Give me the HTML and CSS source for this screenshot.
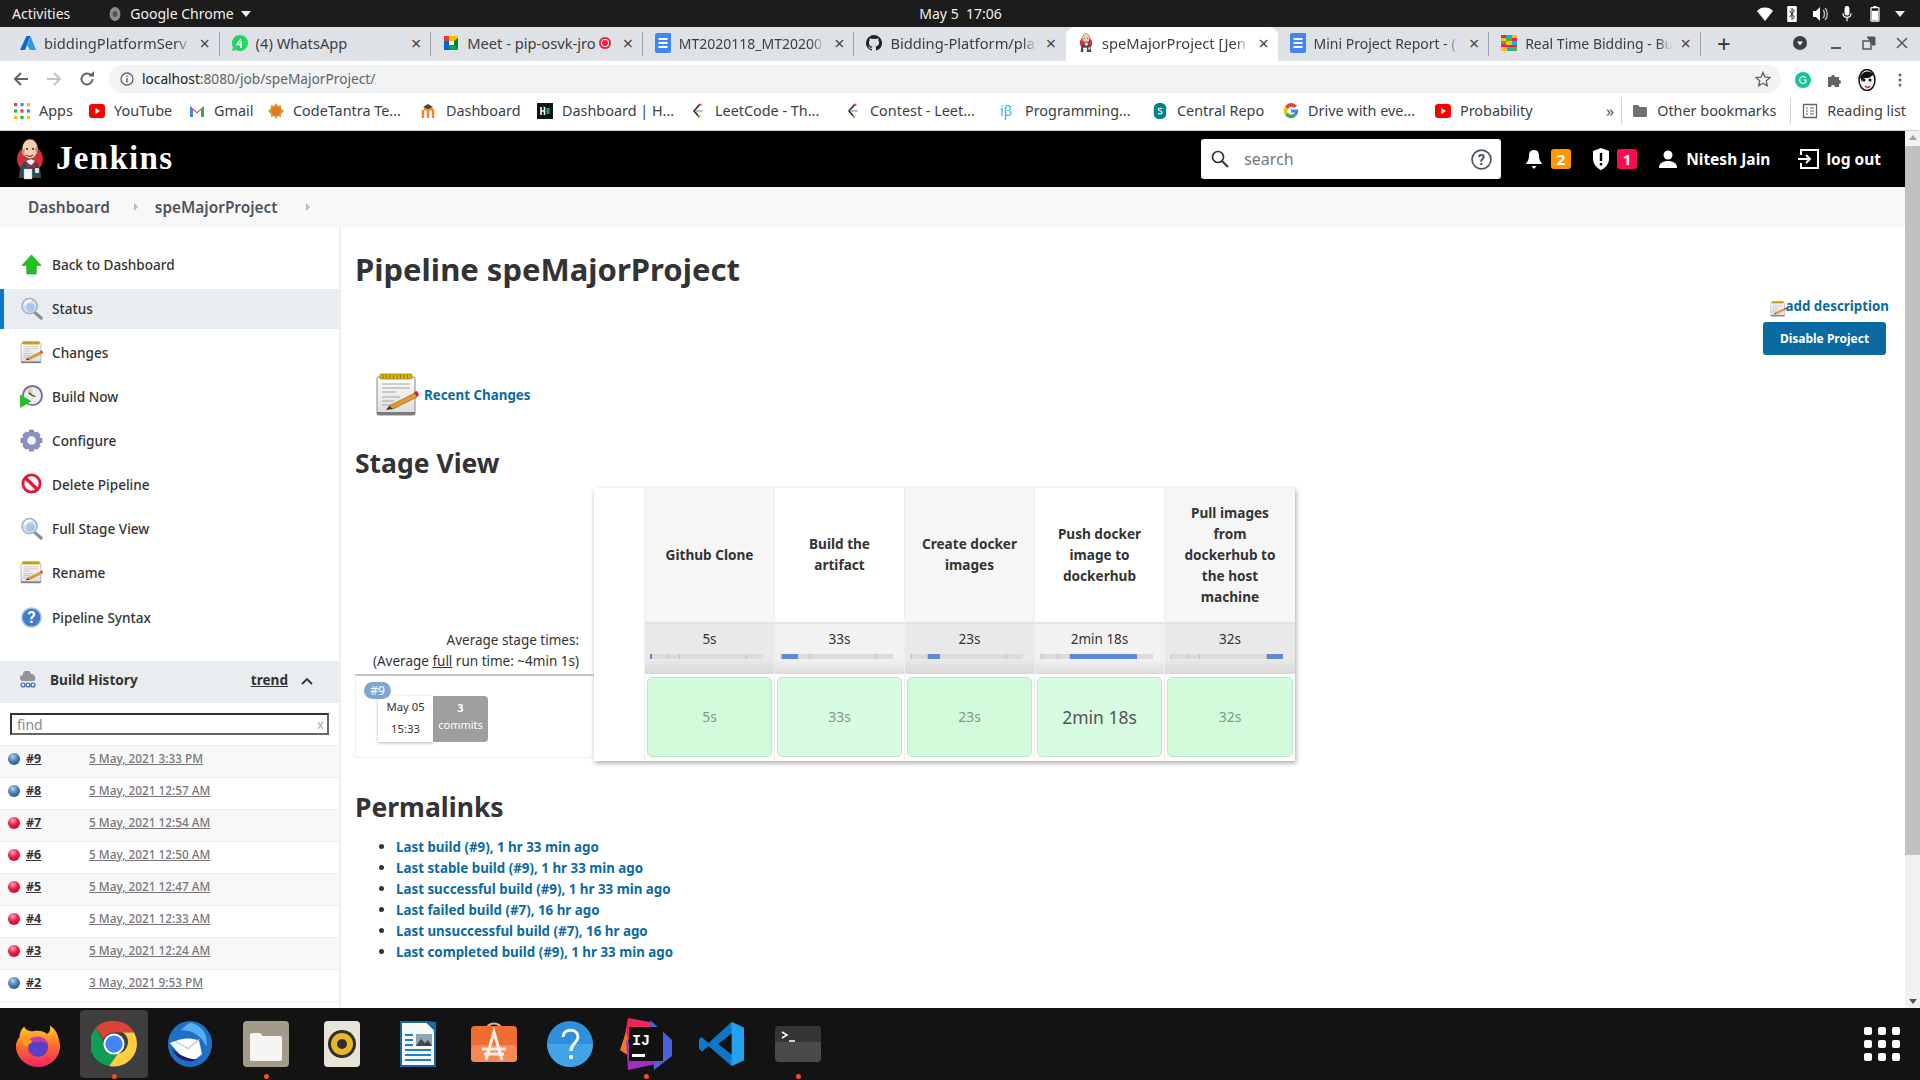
FILE: index.html
```html
<!DOCTYPE html>
<html lang="en">
<head>
<meta charset="utf-8">
<title>speMajorProject [Jenkins]</title>
<link rel="stylesheet" href="styles.css">
</head>
<body>
<svg class="defs" aria-hidden="true">
  <defs>
    <radialGradient id="gBlue" cx="40%" cy="30%" r="75%"><stop offset="0" stop-color="#b8cfe8"/><stop offset=".55" stop-color="#4a7fb8"/><stop offset="1" stop-color="#2a5488"/></radialGradient>
    <radialGradient id="gRed" cx="40%" cy="30%" r="75%"><stop offset="0" stop-color="#ffb0c0"/><stop offset=".5" stop-color="#ef1f45"/><stop offset="1" stop-color="#c30a2c"/></radialGradient>
    <linearGradient id="gPage" x1="0" y1="0" x2="0" y2="1"><stop offset="0" stop-color="#fdfdfd"/><stop offset="1" stop-color="#dcdcdc"/></linearGradient>
    <linearGradient id="gFox" x1="0" y1="0" x2="0" y2="1"><stop offset="0" stop-color="#ffd02e"/><stop offset=".5" stop-color="#ff6a2a"/><stop offset="1" stop-color="#f0246a"/></linearGradient>
    <symbol id="notepad" viewBox="0 0 44 44">
      <rect x="2" y="4" width="38" height="38" rx="2" fill="url(#gPage)" stroke="#8a8a8a"/>
      <rect x="2" y="39" width="38" height="3" fill="#7d7d7d"/>
      <rect x="5" y="1" width="32" height="5" rx="1" fill="#d8b516" stroke="#8d7a12" stroke-width=".7"/>
      <path d="M8 2v3M11.500 2v3M15 2v3M18.500 2v3M22 2v3M25.500 2v3M29 2v3M32.500 2v3" stroke="#7a6a10" stroke-width=".8"/>
      <path d="M7 11h28M7 15h28M7 19h14M7 24h18M7 28h12M7 32h10" stroke="#a5a5a5" stroke-width="1"/>
      <path d="M14 33l26-13 2 4-24 12z" fill="#e39a2c" stroke="#9b6414" stroke-width=".7"/>
      <path d="M39 19l3-1 2 4-2 2z" fill="#e2173f"/>
      <path d="M14 33l4 3-7 1z" fill="#3b3226"/>
    </symbol>
    <symbol id="lens" viewBox="0 0 24 24">
      <path d="M14 15l8 7" stroke="#8a8f96" stroke-width="3.400" stroke-linecap="round"/>
      <circle cx="10" cy="9.500" r="8" fill="#cfe2f5" stroke="#a8b2bd" stroke-width="1.600"/>
      <path d="M5 8a5.500 5.500 0 0 1 7-4" stroke="#fff" stroke-width="2" fill="none"/>
      <circle cx="11" cy="11" r="4.500" fill="#8db6e0" opacity=".6"/>
    </symbol>
    <symbol id="ball-blue" viewBox="0 0 14 14"><circle cx="7" cy="7" r="6" fill="url(#gBlue)"/></symbol>
    <symbol id="ball-red" viewBox="0 0 14 14"><circle cx="7" cy="7" r="6" fill="url(#gRed)"/></symbol>
    <symbol id="doc" viewBox="0 0 16 20"><path d="M0 2a2 2 0 0 1 2-2h14v18a2 2 0 0 1-2 2H2a2 2 0 0 1-2-2z" fill="#4285f4"/><path d="M3.500 6h9M3.500 10h9M3.500 14h9" stroke="#fff" stroke-width="2"/></symbol>
    <symbol id="yt" viewBox="0 0 16 16"><rect x="0" y="1" width="16" height="14" rx="3" fill="#f00"/><path d="M6.500 5l4.500 3-4.500 3z" fill="#fff"/></symbol>
    <symbol id="leet" viewBox="0 0 16 20"><path d="M10 2L3 10l7 8" fill="none" stroke="#333" stroke-width="2"/><path d="M5 10h9" stroke="#aaa" stroke-width="2"/><path d="M8 16l3 1" stroke="#f89f1b" stroke-width="2"/><circle cx="11" cy="2" r="1.500" fill="#e8443a"/></symbol>
    <symbol id="jhead" viewBox="0 0 30 42">
      <circle cx="15" cy="21" r="13" fill="#d62b3a"/>
      <path d="M4 40c0-11 4-18 11-18s11 7 11 18z" fill="#2f4a58"/>
      <path d="M11 23l5 5 4-5-4-2z" fill="#f2f2f2"/>
      <path d="M12 25l4 2 4-2v5l-4-2-4 2z" fill="#d02030"/>
      <ellipse cx="15" cy="11" rx="8" ry="10" fill="#f3cdb0" stroke="#3b2c25" stroke-width=".7"/>
      <path d="M7 12c-1 3 0 5 2 6l1-7zM22 8c1 3 1 5 0 8l-2-5z" fill="#a89a8e"/>
      <circle cx="12" cy="11" r="1" fill="#222"/><circle cx="18" cy="11" r="1" fill="#222"/>
      <path d="M11 17c2 1.500 5 1.500 7 0" stroke="#8a2e24" stroke-width="1.200" fill="none"/>
      <rect x="9" y="31" width="8" height="10" fill="#f6f6f6" stroke="#aaa" stroke-width=".4"/>
      <rect x="20" y="30" width="4" height="5" rx="1" fill="#efe3d8"/>
    </symbol>
  </defs>
</svg>

<div class="gnome">
  <div class="gnome-left"><span>Activities</span><span class="gnome-app"><svg class="i14" viewBox="0 0 14 18"><ellipse cx="7" cy="9" rx="7" ry="9" fill="#8c8c8c"/><ellipse cx="7" cy="9" rx="3" ry="4" fill="#555"/></svg>Google Chrome<i class="caret"></i></span></div>
  <div class="gnome-clock">May 5&nbsp; 17:06</div>
  <div class="gnome-tray">
    <svg class="i16" viewBox="0 0 16 16"><path d="M0 5a11 11 0 0 1 16 0L8 15z" fill="#fff"/></svg>
    <svg class="i16" viewBox="0 0 12 20"><rect width="12" height="20" rx="1.500" fill="#fff"/><path d="M3 6l6 8-3 3V3l3 3-6 8" fill="none" stroke="#222" stroke-width="1.200"/></svg>
    <svg class="i16" viewBox="0 0 16 16"><path d="M1 5h3l4-4v14l-4-4H1z" fill="#fff"/><path d="M11 4c2 2 2 6 0 8M13 2c3 3 3 9 0 12" stroke="#bbb" fill="none" stroke-width="1.400"/></svg>
    <svg class="i16" viewBox="0 0 16 20"><rect x="5" y="0" width="6" height="12" rx="3" fill="#fff"/><path d="M3 9c0 7 10 7 10 0M8 14v5" stroke="#fff" fill="none" stroke-width="1.500"/></svg>
    <svg class="i16" viewBox="0 0 12 20"><rect x="4" y="0" width="4" height="2" fill="#fff"/><rect x="1" y="2" width="10" height="17" rx="1" fill="none" stroke="#fff" stroke-width="1.500"/><rect x="2" y="6" width="8" height="12" fill="#fff"/></svg>
    <i class="caret"></i>
  </div>
</div>

<div class="tabstrip">
  <div class="tab"><svg class="fav" viewBox="0 0 16 16"><path d="M6.500 1h4L5 15H0z" fill="#0a6cc4"/><path d="M10.500 1l5.500 14h-6L8 11H5l3-2z" fill="#2a9ae8"/></svg><span class="tab-title">biddingPlatformServ</span><span class="tab-x">×</span></div>
  <div class="tab"><svg class="fav" viewBox="0 0 16 16"><path d="M8 0a8 8 0 0 1 0 16 8 8 0 0 1-4-1l-4 1 1-4A8 8 0 0 1 8 0z" fill="#25d366"/><path d="M8.800 4L5 9.500h5M9 6v7" stroke="#fff" stroke-width="1.300" fill="none"/></svg><span class="tab-title tab-meet">(4) WhatsApp</span><span class="tab-x">×</span></div>
  <div class="tab"><svg class="fav" viewBox="0 0 16 16"><rect x="1" y="1" width="14" height="14" rx="2" fill="#ffba00"/><rect x="1" y="9" width="14" height="6" fill="#00ac47"/><rect x="1" y="1" width="5" height="14" fill="#0066da"/><rect x="1" y="1" width="5" height="5" fill="#e53935"/><rect x="6" y="6" width="5" height="4" fill="#fff"/><path d="M11 6l4-3v10l-4-3z" fill="#00832d"/></svg><span class="tab-title tab-meet">Meet - pip-osvk-jro<i class="rec"></i></span><span class="tab-x">×</span></div>
  <div class="tab"><svg class="fav fav-doc"><use href="#doc"/></svg><span class="tab-title tab-tight">MT2020118_MT20200</span><span class="tab-x">×</span></div>
  <div class="tab"><svg class="fav" viewBox="0 0 16 16"><path d="M8 0a8 8 0 0 0-2.500 15.600c.4.100.5-.2.500-.4v-1.400c-2.200.5-2.700-1-2.700-1-.4-.9-.9-1.200-.9-1.200-.7-.5.100-.5.100-.5.800.100 1.200.8 1.200.8.700 1.200 1.900.9 2.300.7.100-.5.300-.9.500-1.100-1.800-.2-3.600-.9-3.600-4 0-.9.300-1.600.8-2.100-.1-.2-.4-1 .1-2.100 0 0 .7-.2 2.200.8a7.600 7.600 0 0 1 4 0c1.500-1 2.200-.8 2.200-.8.400 1.100.2 1.900.1 2.100.5.600.8 1.300.8 2.100 0 3.100-1.900 3.800-3.700 4 .3.300.6.800.6 1.500v2.200c0 .2.100.5.500.4A8 8 0 0 0 8 0z" fill="#222"/></svg><span class="tab-title">Bidding-Platform/pla</span><span class="tab-x">×</span></div>
  <div class="tab tab-active"><svg class="fav fav-doc" viewBox="0 0 30 42"><use href="#jhead"/></svg><span class="tab-title">speMajorProject [Jen</span><span class="tab-x">×</span></div>
  <div class="tab"><svg class="fav fav-doc"><use href="#doc"/></svg><span class="tab-title tab-tight">Mini Project Report - (</span><span class="tab-x">×</span></div>
  <div class="tab"><svg class="fav" viewBox="0 0 16 16"><rect width="16" height="16" fill="#e91e63"/><path d="M0 3h5v3H0zM11 0h5v3h-5zM5 6h6v4H5zM0 12h6v4H0z" fill="#ffc107"/><path d="M5 0h6v3H5zM11 6h5v4h-5zM6 12h5v4H6z" fill="#00bcd4"/><path d="M0 6h5v3H0zM5 3h6v3H5zM11 12h5v4h-5z" fill="#4caf50"/></svg><span class="tab-title tab-tight">Real Time Bidding - Bu</span><span class="tab-x">×</span></div>
  <div class="tab-new">+</div>
  <div class="winctl">
    <svg class="i14 w-first" viewBox="0 0 14 14"><circle cx="7" cy="7" r="7" fill="#3c4043"/><path d="M4 5.500h6L7 9.500z" fill="#fff"/></svg>
    <svg class="i14" viewBox="0 0 14 14"><rect x="2" y="11" width="10" height="2" fill="#555"/></svg>
    <svg class="i14" viewBox="0 0 14 14"><path d="M1 5h8v8H1z" fill="none" stroke="#555" stroke-width="1.500"/><path d="M5 1h8v8h-3" fill="#555" stroke="#555" stroke-width="1"/></svg>
    <svg class="i14" viewBox="0 0 14 14"><path d="M2 2l10 10M12 2L2 12" stroke="#555" stroke-width="1.500"/></svg>
  </div>
</div>

<div class="toolbar">
  <svg class="nav" viewBox="0 0 16 16"><path d="M15 8H2M8 2L2 8l6 6" fill="none" stroke="#5f6368" stroke-width="2"/></svg>
  <svg class="nav" viewBox="0 0 16 16"><path d="M1 8h13M8 2l6 6-6 6" fill="none" stroke="#bfc1c4" stroke-width="2"/></svg>
  <svg class="nav" viewBox="0 0 16 16"><path d="M13.500 8A5.500 5.500 0 1 1 11.800 4" fill="none" stroke="#5f6368" stroke-width="1.900"/><path d="M9.500 5.500H15V0z" fill="#5f6368"/></svg>
  <div class="omni">
    <svg class="i14" viewBox="0 0 14 14"><circle cx="7" cy="7" r="6" fill="none" stroke="#5f6368" stroke-width="1.300"/><path d="M7 6v4.500M7 3.500v1.500" stroke="#5f6368" stroke-width="1.400"/></svg>
    <span class="url"><b>localhost</b>:8080/job/speMajorProject/</span>
    <svg class="i16 star" viewBox="0 0 16 16"><path d="M8 1.500l2 4.600 5 .5-3.800 3.300 1.100 4.900L8 12.300l-4.300 2.500 1.100-4.900L1 6.600l5-.5z" fill="none" stroke="#5f6368" stroke-width="1.300"/></svg>
  </div>
  <div class="ext">
    <svg class="i16" viewBox="0 0 16 16"><circle cx="8" cy="8" r="8" fill="#15c39a"/><path d="M11 6a3.500 3.500 0 1 0 0 4V8H8.500" fill="none" stroke="#fff" stroke-width="1.200"/></svg>
    <svg class="i16" viewBox="0 0 16 16"><path d="M2 5h3a2 2 0 1 1 4 0h4v3a2 2 0 1 1 0 4v3H9a2 2 0 1 0-4 0H2z" fill="#5f6368"/></svg>
    <svg class="i20" viewBox="0 0 20 22"><ellipse cx="10" cy="11" rx="8" ry="10.500" fill="#f2f2f2" stroke="#111" stroke-width="1.500"/><path d="M3 8c3-7 11-7 14-2-3 0-3 3-6 3S6 8 5 13z" fill="#111"/><circle cx="7" cy="11" r="1.500" fill="#111"/><circle cx="13" cy="11" r="1.500" fill="#111"/><path d="M8 17c2 2 4 2 5 0" stroke="#b02a4a" stroke-width="1.500" fill="none"/></svg>
    <svg class="i16" viewBox="0 0 16 16"><circle cx="8" cy="3" r="1.500" fill="#5f6368"/><circle cx="8" cy="8" r="1.500" fill="#5f6368"/><circle cx="8" cy="13" r="1.500" fill="#5f6368"/></svg>
  </div>
</div>

<div class="bookmarks">
  <a class="bm"><svg class="i15" viewBox="0 0 15 15"><path d="M0 0h3v3H0z" fill="#ea4335"/><path d="M6 0h3v3H6z" fill="#4285f4"/><path d="M12 0h3v3h-3z" fill="#fbbc05"/><path d="M0 6h3v3H0z" fill="#34a853"/><path d="M6 6h3v3H6z" fill="#ea4335"/><path d="M12 6h3v3h-3z" fill="#4285f4"/><path d="M0 12h3v3H0z" fill="#fbbc05"/><path d="M6 12h3v3H6z" fill="#34a853"/><path d="M12 12h3v3h-3z" fill="#fbbc05"/></svg>Apps</a>
  <a class="bm"><svg class="i15"><use href="#yt"/></svg>YouTube</a>
  <a class="bm"><svg class="i15" viewBox="0 0 16 16"><path d="M1 14V3l7 6 7-6v11h-3V7L8 10.500 4 7v7z" fill="#ea4335"/><path d="M1 14V3l3 3v8z" fill="#4285f4"/><path d="M15 14V3l-3 3v8z" fill="#34a853"/></svg>Gmail</a>
  <a class="bm"><svg class="i15" viewBox="0 0 16 16"><path d="M8 0l2 3 3-1v3l3 3-3 3v3l-3-1-2 3-2-3-3 1v-3L0 8l3-3V2l3 1z" fill="#c2a032"/><circle cx="8" cy="8" r="4.500" fill="#f37021"/></svg>CodeTantra Te...</a>
  <a class="bm"><svg class="i15" viewBox="0 0 16 16"><path d="M2 15V7M7 15V7M12 15V8c0-1.500-1.500-2-3-2H3" fill="none" stroke="#f58220" stroke-width="2.500"/><path d="M2 4l5-3 5 3-5 2z" fill="#444"/></svg>Dashboard</a>
  <a class="bm"><svg class="i15" viewBox="0 0 16 16"><rect width="16" height="16" fill="#0e141e"/><path d="M4 4v8M7.500 4v8M4 8h3.500" stroke="#fff" stroke-width="1.600"/><rect x="9.500" y="5" width="3" height="6" fill="#1ba94c"/></svg>Dashboard | H...</a>
  <a class="bm"><svg class="i15" viewBox="0 0 16 20"><use href="#leet"/></svg>LeetCode - Th...</a>
  <a class="bm"><svg class="i15" viewBox="0 0 16 20"><use href="#leet"/></svg>Contest - Leet...</a>
  <a class="bm"><span class="ib">iβ</span>Programming...</a>
  <a class="bm"><svg class="i15" viewBox="0 0 16 18"><path d="M8 0c4 0 7 2 7 6v6c0 4-3 6-7 6s-7-2-7-6V6c0-4 3-6 7-6z" fill="#038387"/><path d="M10.500 6.500C9 5.500 6 5.500 6 7.200s4.500 1.300 4.500 3.400c0 2-3.500 2-5 1" stroke="#fff" fill="none" stroke-width="1.200"/></svg>Central Repo</a>
  <a class="bm"><svg class="i15" viewBox="0 0 16 16"><path d="M14 3A7 7 0 0 0 2 4l3 2a3.500 3.500 0 0 1 6-1z" fill="#ea4335"/><path d="M2 4a7 7 0 0 0 0 8l3-2a3.500 3.500 0 0 1 0-4z" fill="#fbbc05"/><path d="M2 12a7 7 0 0 0 11 1l-3-2a3.500 3.500 0 0 1-5-1z" fill="#34a853"/><path d="M13 13a7 7 0 0 0 2-6.500H8v3h3.800A3 3 0 0 1 10 11z" fill="#4285f4"/></svg>Drive with eve...</a>
  <a class="bm"><svg class="i15"><use href="#yt"/></svg>Probability</a>
  <span class="bm-more">»</span>
  <a class="bm bm-sep"><svg class="i15" viewBox="0 0 16 16"><path d="M1 3a1 1 0 0 1 1-1h4l2 2h6a1 1 0 0 1 1 1v8a1 1 0 0 1-1 1H2a1 1 0 0 1-1-1z" fill="#6f7377"/></svg>Other bookmarks</a>
  <a class="bm bm-sep"><svg class="i15" viewBox="0 0 16 16"><path d="M1.500 1.500h13v13h-13z" fill="none" stroke="#5f6368" stroke-width="1.300"/><path d="M4 5h2M8 5h4M4 8h2M8 8h4M4 11h2M8 11h4" stroke="#5f6368" stroke-width="1.200"/></svg>Reading list</a>
</div>

<div class="viewport">
  <div class="page">
    <header class="jhead">
      <svg class="jlogo" viewBox="0 0 30 42"><use href="#jhead"/></svg>
      <span class="jname">Jenkins</span>
      <div class="jsearch">
        <svg class="i18" viewBox="0 0 18 18"><circle cx="7" cy="7" r="5.500" fill="none" stroke="#333" stroke-width="1.700"/><path d="M11 11l6 6" stroke="#333" stroke-width="1.900"/></svg>
        <span class="jsearch-text">search</span>
        <svg class="q" viewBox="0 0 20 20"><circle cx="10" cy="10" r="9" fill="none" stroke="#4d545d" stroke-width="1.600"/><text x="10" y="15" text-anchor="middle" class="q-mark">?</text></svg>
      </div>
      <svg class="hd-ic hd-bell" viewBox="0 0 18 20"><path d="M9 1c4 0 5 3 5 6 0 5 3 7 3 8H1c0-1 3-3 3-8 0-3 1-6 5-6z" fill="#fff"/><path d="M6.500 17h5l-2.500 3z" fill="#fff"/></svg>
      <span class="hd-badge orange">2</span>
      <svg class="hd-ic hd-shield" viewBox="0 0 16 22"><path d="M8 0l8 3v8c0 5-4 9-8 11-4-2-8-6-8-11V3z" fill="#fff"/><path d="M8 5v8M8 15v2.500" stroke="#000" stroke-width="2.400"/></svg>
      <span class="hd-badge red">1</span>
      <svg class="hd-ic hd-user" viewBox="0 0 18 18"><circle cx="9" cy="5" r="4.500" fill="#fff"/><path d="M0 18c0-5 4-7 9-7s9 2 9 7z" fill="#fff"/></svg>
      <span class="hd-name">Nitesh Jain</span>
      <svg class="hd-ic hd-out" viewBox="0 0 22 20"><path d="M4 6V1h17v18H4v-5" fill="none" stroke="#fff" stroke-width="2"/><path d="M1 10h12M9 6l4 4-4 4" fill="none" stroke="#fff" stroke-width="2"/></svg>
      <span class="hd-name">log out</span>
    </header>

    <nav class="crumbs"><a>Dashboard</a><i class="crumb-arrow"></i><a>speMajorProject</a><i class="crumb-arrow"></i></nav>

    <div class="columns">
      <aside class="side">
        <ul class="tasks">
          <li class="task"><svg class="task-ic" viewBox="0 0 24 24"><path d="M12 2l10 11h-5v9H7v-9H2z" fill="#1fc21f" stroke="#119a11" stroke-width=".6"/></svg>Back to Dashboard</li>
          <li class="task task-on"><svg class="task-ic"><use href="#lens"/></svg>Status</li>
          <li class="task"><svg class="task-ic"><use href="#notepad"/></svg>Changes</li>
          <li class="task"><svg class="task-ic" viewBox="0 0 24 24"><circle cx="13" cy="11" r="10" fill="#ececf2" stroke="#7c6f9e" stroke-width="2"/><path d="M13 11V3a8 8 0 0 0-6 3z" fill="#e3d98b"/><path d="M13 11l-4-3M13 11l3 1" stroke="#333" stroke-width="1.200"/><path d="M0 10l12 7-12 7z" fill="#26c026"/></svg>Build Now</li>
          <li class="task"><svg class="task-ic" viewBox="0 0 24 24"><path d="M10 1h4l1 3 3-1 3 3-1 3 3 1v4l-3 1 1 3-3 3-3-1-1 3h-4l-1-3-3 1-3-3 1-3-3-1v-4l3-1-1-3 3-3 3 1z" fill="#8d8fbf" stroke="#6c6e99" stroke-width=".6"/><circle cx="12" cy="12" r="4.500" fill="#f2f2f2"/></svg>Configure</li>
          <li class="task"><svg class="task-ic" viewBox="0 0 24 24"><circle cx="12" cy="11" r="9" fill="#fff" stroke="#e01a3c" stroke-width="3"/><path d="M5.500 5l13 12.500" stroke="#e01a3c" stroke-width="3.400"/></svg>Delete Pipeline</li>
          <li class="task"><svg class="task-ic"><use href="#lens"/></svg>Full Stage View</li>
          <li class="task"><svg class="task-ic"><use href="#notepad"/></svg>Rename</li>
          <li class="task"><svg class="task-ic" viewBox="0 0 24 24"><circle cx="12" cy="12" r="10" fill="#3e7cc4" stroke="#a3bfe0" stroke-width="1.600"/><text x="12" y="18" text-anchor="middle" class="help-mark">?</text></svg>Pipeline Syntax</li>
        </ul>

        <div class="bh-head">
          <svg class="bh-ic" viewBox="0 0 18 18"><path d="M4 10a3 3 0 0 1 0-6 4 4 0 0 1 8-1 4 4 0 0 1 3 7z" fill="#8f9499"/><circle cx="4" cy="14" r="2" fill="none" stroke="#2f64a8" stroke-width="1.200"/><circle cx="9" cy="14" r="2" fill="none" stroke="#2f64a8" stroke-width="1.200"/><circle cx="14" cy="14" r="2" fill="none" stroke="#2f64a8" stroke-width="1.200"/></svg>
          <span class="bh-title">Build History</span>
          <a class="bh-trend">trend</a>
          <svg class="bh-chev" viewBox="0 0 12 8"><path d="M1 7l5-5 5 5" fill="none" stroke="#333" stroke-width="1.800"/></svg>
        </div>
        <div class="find-wrap"><div class="find"><span>find</span><span>x</span></div></div>
        <ul class="builds">
          <li class="build"><svg class="ball"><use href="#ball-blue"/></svg><a class="b-num">#9</a><a class="b-date">5 May, 2021 3:33 PM</a></li>
          <li class="build"><svg class="ball"><use href="#ball-blue"/></svg><a class="b-num">#8</a><a class="b-date">5 May, 2021 12:57 AM</a></li>
          <li class="build"><svg class="ball"><use href="#ball-red"/></svg><a class="b-num">#7</a><a class="b-date">5 May, 2021 12:54 AM</a></li>
          <li class="build"><svg class="ball"><use href="#ball-red"/></svg><a class="b-num">#6</a><a class="b-date">5 May, 2021 12:50 AM</a></li>
          <li class="build"><svg class="ball"><use href="#ball-red"/></svg><a class="b-num">#5</a><a class="b-date">5 May, 2021 12:47 AM</a></li>
          <li class="build"><svg class="ball"><use href="#ball-red"/></svg><a class="b-num">#4</a><a class="b-date">5 May, 2021 12:33 AM</a></li>
          <li class="build"><svg class="ball"><use href="#ball-red"/></svg><a class="b-num">#3</a><a class="b-date">5 May, 2021 12:24 AM</a></li>
          <li class="build"><svg class="ball"><use href="#ball-blue"/></svg><a class="b-num">#2</a><a class="b-date">3 May, 2021 9:53 PM</a></li>
        </ul>
      </aside>

      <main class="main">
        <h1 class="title">Pipeline speMajorProject</h1>
        <div class="actions">
          <a class="add-desc"><svg class="i15 add-ic" viewBox="0 0 44 44"><use href="#notepad"/></svg>add description</a>
          <button class="disable">Disable Project</button>
        </div>
        <div class="recent"><svg class="recent-ic"><use href="#notepad"/></svg><a class="link">Recent Changes</a></div>
        <h2 class="sub">Stage View</h2>
        <div class="stage">
          <div class="stage-left">
            <div class="avg-note">Average stage times:<br>(Average <u>full</u> run time: ~4min 1s)</div>
            <div class="run">
              <span class="run-badge">#9</span>
              <div class="run-date">May 05<br>15:33</div>
              <div class="run-commits"><b>3</b><br>commits</div>
            </div>
          </div>
          <div class="stage-table">
            <div class="st-blank"></div>
            <div class="st-col alt">
              <div class="st-head">Github Clone</div>
              <div class="st-avg">5s<div class="bar"><i class="seg on" style="flex-basis:2px"></i><i class="seg" style="flex-basis:16px"></i><i class="seg" style="flex-basis:12px"></i><i class="seg" style="flex-basis:67px"></i><i class="seg" style="flex-basis:16px"></i></div></div>
              <div class="st-cell"><span class="small">5s</span></div>
            </div>
            <div class="st-col">
              <div class="st-head">Build the<br>artifact</div>
              <div class="st-avg">33s<div class="bar"><i class="seg" style="flex-basis:2px"></i><i class="seg on" style="flex-basis:16px"></i><i class="seg" style="flex-basis:12px"></i><i class="seg" style="flex-basis:67px"></i><i class="seg" style="flex-basis:16px"></i></div></div>
              <div class="st-cell"><span class="small">33s</span></div>
            </div>
            <div class="st-col alt">
              <div class="st-head">Create docker<br>images</div>
              <div class="st-avg">23s<div class="bar"><i class="seg" style="flex-basis:2px"></i><i class="seg" style="flex-basis:16px"></i><i class="seg on" style="flex-basis:12px"></i><i class="seg" style="flex-basis:67px"></i><i class="seg" style="flex-basis:16px"></i></div></div>
              <div class="st-cell"><span class="small">23s</span></div>
            </div>
            <div class="st-col">
              <div class="st-head">Push docker<br>image to<br>dockerhub</div>
              <div class="st-avg">2min 18s<div class="bar"><i class="seg" style="flex-basis:2px"></i><i class="seg" style="flex-basis:16px"></i><i class="seg" style="flex-basis:12px"></i><i class="seg on" style="flex-basis:67px"></i><i class="seg" style="flex-basis:16px"></i></div></div>
              <div class="st-cell"><span class="big">2min 18s</span></div>
            </div>
            <div class="st-col alt st-last">
              <div class="st-head">Pull images<br>from<br>dockerhub to<br>the host<br>machine</div>
              <div class="st-avg">32s<div class="bar"><i class="seg" style="flex-basis:2px"></i><i class="seg" style="flex-basis:16px"></i><i class="seg" style="flex-basis:12px"></i><i class="seg" style="flex-basis:67px"></i><i class="seg on" style="flex-basis:16px"></i></div></div>
              <div class="st-cell"><span class="small">32s</span></div>
            </div>
          </div>
        </div>
        <h2 class="sub perma-title">Permalinks</h2>
        <ul class="perma">
          <li><a class="link">Last build (#9), 1 hr 33 min ago</a></li>
          <li><a class="link">Last stable build (#9), 1 hr 33 min ago</a></li>
          <li><a class="link">Last successful build (#9), 1 hr 33 min ago</a></li>
          <li><a class="link">Last failed build (#7), 16 hr ago</a></li>
          <li><a class="link">Last unsuccessful build (#7), 16 hr ago</a></li>
          <li><a class="link">Last completed build (#9), 1 hr 33 min ago</a></li>
        </ul>
      </main>
    </div>
  </div>
  <div class="scrollbar">
    <i class="sb-up"></i>
    <div class="sb-track"><div class="sb-thumb"></div></div>
    <i class="sb-down"></i>
  </div>
</div>

<footer class="dock">
  <div class="dock-item"><svg class="dock-ic" viewBox="0 0 48 50"><path d="M46 18c-1-6-5-10-9-13 1 5-1 8-3 9-4-3-9-4-14-3C14 12 10 9 9 6 5 10 4 14 4 17 1 21 0 25 0 27a24 23 0 0 0 48 0c0-3-1-6-2-9z" fill="url(#gFox)"/><circle cx="24" cy="28" r="11" fill="#5b3fc4"/><path d="M13 21c5-5 14-5 19-1 2 2 3 4 3 7-3-4-7-5-11-4-4 0-8 0-11-2z" fill="#c239b3"/><path d="M5 18c6-1 11 1 13 5-3 1-5 3-5 6-4-2-7-6-8-11z" fill="#ff9a1f"/></svg></div>
  <div class="dock-item active"><svg class="dock-ic" viewBox="0 0 48 48"><path d="M24 0a24 24 0 0 1 21 12H24a12 12 0 0 0-11 7L5 7A24 24 0 0 1 24 0z" fill="#db4437"/><path d="M5 7l12 21a12 12 0 0 0 10 7l-8 12A24 24 0 0 1 5 7z" fill="#0f9d58"/><path d="M45 12a24 24 0 0 1-26 35l9-13a12 12 0 0 0 5-22z" fill="#ffcd40"/><circle cx="24" cy="24" r="11" fill="#fff"/><circle cx="24" cy="24" r="9" fill="#4285f4"/></svg><i class="dot"></i></div>
  <div class="dock-item"><svg class="dock-ic" viewBox="0 0 48 50"><ellipse cx="24" cy="25" rx="24" ry="25" fill="#1f6fc4"/><path d="M24 2C36 4 44 14 42 28 36 16 28 10 14 10 18 6 20 4 24 2z" fill="#53b1f0"/><path d="M2 24c8-4 24-8 32-2l3 14c-6 6-14 10-19 6z" fill="#fff"/><path d="M8 22l14 8 12-10" fill="none" stroke="#c7c7d8" stroke-width="1.500"/><path d="M4 30c4 8 10 14 22 14l6-2c-10 0-22-6-28-12z" fill="#281c6e"/></svg></div>
  <div class="dock-item"><svg class="dock-ic" viewBox="0 0 46 46"><rect width="46" height="46" rx="4" fill="#a39b89"/><path d="M7 14a2 2 0 0 1 2-2h8l3 3h17a2 2 0 0 1 2 2v21a2 2 0 0 1-2 2H9a2 2 0 0 1-2-2z" fill="#f6f5f3"/></svg><i class="dot"></i></div>
  <div class="dock-item"><svg class="dock-ic rhy" viewBox="0 0 36 46"><rect width="36" height="46" rx="4" fill="#e8e4d9"/><circle cx="18" cy="23" r="14" fill="#2e2e2e"/><circle cx="18" cy="23" r="11" fill="#e8b81f"/><circle cx="18" cy="23" r="5" fill="#2e2e2e"/></svg></div>
  <div class="dock-item"><svg class="dock-ic rhy" viewBox="0 0 36 46"><path d="M1 1h26l8 8v36H1z" fill="#f7f7f7" stroke="#18699f" stroke-width="2"/><path d="M27 0l9 9V1z" fill="#18699f"/><rect x="16" y="13" width="16" height="12" fill="#8ea6b5"/><path d="M16 25l5-7 4 4 3-3 4 6z" fill="#444"/><path d="M5 14h8M5 19h8M5 24h8M5 29h26M5 34h26M5 39h26" stroke="#1e82c2" stroke-width="2.200"/></svg></div>
  <div class="dock-item"><svg class="dock-ic dock-store" viewBox="0 0 46 50"><path d="M15 12C15 2 31 2 31 12" fill="none" stroke="#d6b88c" stroke-width="2"/><rect y="7" width="46" height="36" rx="4" fill="#ef6d33"/><rect y="26" width="46" height="17" rx="4" fill="#f68a57"/><path d="M15 41l8-28 8 28M11 30h24M13 35h20" fill="none" stroke="#fbeee6" stroke-width="3"/></svg></div>
  <div class="dock-item"><svg class="dock-ic" viewBox="0 0 46 46"><circle cx="23" cy="23" r="23" fill="#2f8fdc"/><path d="M0 23a23 23 0 0 0 46 0z" fill="#41a4e6"/><path d="M16 16c0-9 15-9 15 0 0 6-7 6-7 14" fill="none" stroke="#fff" stroke-width="3"/><circle cx="24" cy="36" r="2.200" fill="#fff"/></svg></div>
  <div class="dock-item"><svg class="dock-ic dock-ij" viewBox="0 0 52 52"><path d="M8 0l22 4 8 14L4 22z" fill="#f0245d"/><path d="M30 2l22 20v16L34 52z" fill="#4a62e0"/><path d="M6 14L0 32l12 8z" fill="#f97a12"/><path d="M6 22l2 30 28-6z" fill="#a02fc0"/><rect x="9" y="9" width="34" height="34" fill="#111"/><text x="12" y="27" class="ij">IJ</text><rect x="12" y="36" width="13" height="3" fill="#fff"/></svg><i class="dot"></i></div>
  <div class="dock-item"><svg class="dock-ic" viewBox="0 0 48 48"><path d="M34 1l13 6v34l-13 6L10 26 3 32l-3-3V19l3-2 7 6z" fill="#0e78c8"/><path d="M34 1l13 6v34l-13 6z" fill="#25a2ef"/><path d="M34 13L20 24l14 11z" fill="#111"/></svg></div>
  <div class="dock-item"><svg class="dock-ic dock-term" viewBox="0 0 46 36"><rect width="46" height="36" rx="4" fill="#4a4a4a"/><path d="M0 4a4 4 0 0 1 4-4h38a4 4 0 0 1 4 4v12H0z" fill="#353535"/><path d="M7 6l5 3-5 3" fill="none" stroke="#fff" stroke-width="1.500"/><path d="M14 15h6" stroke="#fff" stroke-width="1.500"/></svg><i class="dot"></i></div>
  <div class="dock-apps">
    <i></i><i></i><i></i><i></i><i></i><i></i><i></i><i></i><i></i>
  </div>
</footer>
</body>
</html>
```
FILE: styles.css
```css
* { box-sizing: border-box; }
html, body { margin: 0; padding: 0; }
body { width: 1920px; height: 1080px; overflow: hidden; display: flex; flex-direction: column; font-family: "Noto Sans", Roboto, "Liberation Sans", sans-serif; background: #fff; }
ul { list-style: none; margin: 0; padding: 0; }
.defs { width: 0; height: 0; display: block; flex: none; }
.i14 { width: 14px; height: 14px; flex: none; }
.i15 { width: 16px; height: 16px; flex: none; }
.i16 { width: 16px; height: 16px; flex: none; }
.i18 { width: 18px; height: 18px; flex: none; }
.i20 { width: 20px; height: 22px; flex: none; }
.caret { display: block; width: 0; height: 0; border-left: 5px solid transparent; border-right: 5px solid transparent; border-top: 6px solid #eee; }

.gnome { height: 27px; flex: none; background: #1c1c1c; color: #f0f0f0; font-size: 14px; display: grid; grid-template-columns: 1fr auto 1fr; align-items: center; padding: 0 15px 0 12px; }
.gnome-left { display: flex; align-items: center; gap: 38px; }
.gnome-app { display: flex; align-items: center; gap: 8px; }
.gnome-app .caret { margin-left: -1px; }
.gnome-clock { margin-left: 4px; }
.gnome-tray { display: flex; align-items: center; justify-content: flex-end; gap: 11.500px; }
.gnome-tray .caret { margin-left: 1px; }

.tabstrip { height: 34px; flex: none; background: #dee1e6; display: flex; padding-left: 8px; font-size: 14.700px; color: #3c4043; }
.tab { width: 211.600px; flex: none; display: flex; align-items: center; gap: 8px; padding: 0 8px 2px 12px; border-right: 1px solid #9ea1a6; border-image: linear-gradient(transparent 18%, #9ea1a6 18%, #9ea1a6 82%, transparent 82%) 1; }
.tab-active { background: #fff; border-radius: 9px 9px 0 0; border-right: 0; border-image: none; }
.tab:nth-child(5) { border-right-color: transparent; border-image: none; }
.fav { width: 16px; height: 16px; flex: none; }
.fav-doc { height: 20px; }
.tab-title { flex: 1; min-width: 0; white-space: nowrap; overflow: hidden; -webkit-mask-image: linear-gradient(90deg, #000 90%, transparent); mask-image: linear-gradient(90deg, #000 90%, transparent); }
.tab-tight { font-size: 14px; }
.tab-meet { -webkit-mask-image: none; mask-image: none; display: flex; align-items: center; gap: 3px; }
.rec { display: block; width: 12px; height: 12px; border-radius: 50%; background: #ea1f3d; box-shadow: inset 0 0 0 2px #ea1f3d, inset 0 0 0 3px #fff; flex: none; }
.tab-x { font-size: 18px; color: #444; width: 12px; text-align: center; flex: none; }
.tab-new { width: 46px; flex: none; text-align: center; font-size: 24px; line-height: 33px; color: #333; }
.winctl { margin-left: auto; display: flex; align-items: center; gap: 19px; padding: 0 11px 2px 0; }
.w-first { margin-right: 3px; }

.toolbar { height: 32px; flex: none; display: flex; align-items: flex-start; padding: 4px 0 0 13px; background: #fff; }
.nav { width: 16px; height: 16px; margin: 6px 17px 0 0; flex: none; }
.nav:nth-child(3) { margin-right: 14px; }
.omni { width: 1672px; height: 28px; flex: none; background: #f1f3f4; border-radius: 14px; display: flex; align-items: center; padding: 0 10px 0 11px; font-size: 13.700px; color: #5f6368; gap: 8px; }
.url { margin-top: -2px; }
.url b { color: #202124; font-weight: 400; }
.star { margin-left: auto; }
.ext { display: flex; align-items: center; gap: 15px; padding: 4px 0 0 14px; }

.bookmarks { height: 38px; flex: none; border-bottom: 1px solid #d0d2d5; display: grid; grid-template-columns: 75px 100px 79px 153px 116px 153px 155px 155px 152px 131px 152px 1fr auto auto auto; align-items: center; padding: 0 14px 2px; font-size: 14.400px; color: #3c4043; background: #fff; }
.bm { display: flex; align-items: center; gap: 9px; white-space: nowrap; }
.ib { color: #3ab4d8; font-size: 14px; width: 16px; }
.bm-more { margin-right: 7px; font-size: 16px; color: #555; padding-right: 7px; border-right: 1px solid #d0d2d5; line-height: 26px; }
.bm-sep { padding: 0 14px 0 3px; }
.bm-sep:last-child { border-left: 1px solid #d0d2d5; padding: 0 0 0 11px; height: 26px; }

.viewport { flex: 1; min-height: 0; display: flex; }
.page { flex: 1; min-width: 0; display: flex; flex-direction: column; }
.scrollbar { width: 15px; flex: none; background: #f1f1f1; display: flex; flex-direction: column; align-items: center; padding: 4px 0; }
.sb-up { width: 0; height: 0; border: 4px solid transparent; border-top: 0; border-bottom: 5px solid #a3a3a3; }
.sb-down { width: 0; height: 0; border: 4px solid transparent; border-bottom: 0; border-top: 5px solid #505050; }
.sb-track { flex: 1; width: 100%; padding: 6px 0 144px; }
.sb-thumb { height: 100%; background: #c1c1c1; }

.jhead { height: 56px; flex: none; background: #000; display: flex; align-items: center; padding: 0 24px 0 15px; color: #fff; }
.jlogo { width: 30px; height: 42px; flex: none; }
.jname { font-family: "Liberation Serif", serif; font-weight: 700; font-size: 33px; letter-spacing: 1.300px; margin: -2px 0 0 11px; }
.jsearch { width: 300px; height: 40px; margin-left: auto; background: #fff; border-radius: 3px; display: flex; align-items: center; padding: 0 9px 0 10px; }
.jsearch-text { color: #777; font-size: 16px; margin-left: 15px; flex: 1; }
.q { width: 21px; height: 21px; flex: none; }
.q-mark { font: 700 14px Roboto, sans-serif; fill: #4d545d; }
.hd-ic { flex: none; }
.hd-bell { width: 18px; height: 20px; margin-left: 24px; }
.hd-shield { width: 16px; height: 22px; margin-left: 22px; }
.hd-user { width: 18px; height: 18px; margin-left: 22px; }
.hd-out { width: 22px; height: 20px; margin-left: 27px; }
.hd-badge { width: 20px; height: 20px; border-radius: 3px; text-align: center; line-height: 20px; font-weight: 700; font-size: 15px; margin-left: 8px; }
.hd-badge.orange { background: #ff9800; }
.hd-badge.red { background: #fe0a50; }
.hd-name { font-size: 15.500px; font-weight: 700; white-space: nowrap; }
.hd-user + .hd-name { margin-left: 9px; }
.hd-out + .hd-name { margin-left: 7px; }

.crumbs { height: 40px; flex: none; background: #f8f8f8; display: flex; align-items: center; padding-left: 28px; font-size: 15.400px; font-weight: 600; color: #4d545d; }
.crumb-arrow { width: 0; height: 0; border-left: 4px solid #b5b9be; border-top: 4px solid transparent; border-bottom: 4px solid transparent; margin: 0 17px 0 24px; }
.crumb-arrow:last-child { margin-left: 28px; }

.columns { flex: 1; min-height: 0; display: flex; overflow: hidden; }
.side { width: 341px; flex: none; border-right: 2px solid #eeeeee; padding-top: 16px; font-size: 13.600px; color: #333; }
.task { height: 44px; display: flex; align-items: center; padding: 0 0 2px 20px; font-weight: 500; gap: 9px; }
.task:last-child { padding-bottom: 0; }
.task-on { background: #e9edf0; height: 40px; margin: 2px 0; border-left: 4px solid #0b78c8; padding-left: 16px; }
.task-ic { width: 23px; height: 23px; flex: none; }
.tasks { height: 418px; }
.bh-head { height: 42px; background: #e9edf0; display: flex; align-items: center; padding: 0 0 5px 19px; font-weight: 700; }
.bh-ic { width: 18px; height: 18px; flex: none; }
.bh-title { margin-left: 13px; }
.bh-trend { margin-left: auto; text-decoration: underline; }
.bh-chev { width: 12px; height: 8px; margin: 2px 26px 0 13px; }
.find-wrap { height: 42px; padding: 10px 10px 0; }
.find { height: 22px; border: 2px solid #333; border-right-color: #666; border-bottom-color: #666; padding: 0 3px 0 5px; display: flex; justify-content: space-between; align-items: center; font-size: 14px; color: #8a8a8a; }
.find span:last-child { font-size: 13px; color: #aaa; }
.build { height: 32px; display: flex; align-items: center; border-top: 1px solid #eeeeee; padding: 0 0 6px 7px; }
.build:nth-child(odd) { background: #f8f8f8; }
.builds { border-bottom: 1px solid #eee; }
.ball { width: 14px; height: 14px; flex: none; }
.b-num { width: 63px; margin-left: 5px; font-size: 12.500px; font-weight: 700; text-decoration: underline; color: #333; }
.b-date { margin-top: -2px; font-size: 11.800px; font-weight: 500; text-decoration: underline; color: #777; }

.main { flex: 1; min-width: 0; padding: 22px 19px 0 14px; color: #333; }
.title { margin: 0; font-size: 31px; line-height: 40px; font-weight: 700; color: #333; }
.actions { display: flex; flex-direction: column; align-items: flex-end; }
.add-desc { margin: 7px -3px 0 0; height: 20px; display: flex; align-items: center; color: #0b6aa2; font-weight: 700; font-size: 13.350px; }
.add-ic { margin: 6px 0 0; }
.disable { margin: 6px 0 0 0; width: 123px; height: 33px; border: 0; border-radius: 3px; background: #0b6aa2; color: #fff; font: 700 12px "Noto Sans", sans-serif; }
.recent { display: flex; align-items: center; height: 44px; margin: 18px 0 0 20px; }
.recent-ic { width: 44px; height: 44px; flex: none; }
.link { color: #0b6aa2; font-weight: 700; font-size: 13.350px; }
.recent .link { margin: 0 0 0 5px; }
.sub { margin: 26px 0 0; font-size: 26.500px; line-height: 40px; font-weight: 700; color: #333; }
.stage { display: flex; margin-top: 5px; font-size: 13.500px; }
.stage-left { width: 239px; flex: none; padding-top: 134px; }
.avg-note { height: 52px; text-align: right; padding: 8px 15px 0 0; line-height: 21px; color: #333; }
.run { height: 84px; border: 1px solid #eeeeee; border-top: 2px solid #c4c4c4; border-right: 0; display: flex; align-items: flex-start; padding: 20px 0 0 22px; position: relative; }
.run-badge { position: absolute; left: 8px; top: 6px; width: 27px; height: 17px; border-radius: 9px; background: #7aa7d2; color: #fff; font-size: 12px; text-align: center; line-height: 17px; }
.run-date { width: 55px; height: 46px; background: #fff; box-shadow: 0 1px 3px rgba(0,0,0,.3); font-size: 11.300px; line-height: 22px; text-align: center; }
.run-commits { width: 55px; height: 46px; background: #9e9e9e; border-radius: 0 4px 4px 0; color: #fff; font-size: 11px; line-height: 17px; text-align: center; padding-top: 3px; }
.stage-table { display: flex; box-shadow: 1px 2px 5px rgba(0,0,0,.35); height: 273px; align-self: flex-start; background: #fff; }
.st-blank { width: 50px; }
.st-col { width: 130px; display: flex; flex-direction: column; border-left: 1px solid #eee; }
.st-last { width: 131px; }
.st-head { height: 134px; padding-bottom: 2px; display: flex; align-items: center; justify-content: center; text-align: center; font-weight: 700; font-size: 13.600px; line-height: 21px; color: #333; background: #fff; }
.alt .st-head { background: #f6f6f6; }
.st-avg { height: 52px; border-top: 2px solid #e2e2e2; text-align: center; line-height: 30px; background: linear-gradient(#f2f2f2 70%, #dcdcdc); color: #333; }
.alt .st-avg { background: linear-gradient(#e9e9e9 70%, #d8d8d8); }
.bar { display: flex; width: 113px; height: 5px; margin: 0 0 0 5px; }
.seg { display: block; background: #dcdcdc; border-right: 1px solid #c4c4c4; flex: 0 0 auto; }
.seg:last-child { border-right: 0; }
.seg.on { background: #5b8ad6; border-right: 0; }
.st-cell { flex: 1; margin: 3px 2px 4px; padding-bottom: 1px; display: flex; align-items: center; justify-content: center; background: #d8fce2; border: 1px solid #bfe3c9; border-radius: 5px; }
.alt .st-cell { background: #d1fbdb; }
.small { color: #84968a; font-size: 14px; }
.big { color: #555; font-size: 17.500px; }
.perma-title { margin-top: 26px; }
.perma { margin-top: 9px; padding-left: 41px; list-style: disc; font-size: 14px; }
.perma li { height: 21px; line-height: 21px; }

.dock { height: 72px; flex: none; background: #131313; display: flex; align-items: center; }
.dock-item { width: 76px; flex: none; height: 72px; display: flex; align-items: center; justify-content: center; position: relative; }
.dock-item.active::before { content: ""; position: absolute; left: 4px; right: 4px; top: 2px; bottom: 2px; background: #3e3e3e; border-radius: 4px; }
.dock-ic { width: 46px; height: 46px; position: relative; }
.rhy { width: 36px; }
.dock-store { height: 50px; }
.dock-ij { width: 52px; height: 52px; }
.dock-term { height: 36px; }
.dot { position: absolute; bottom: 1px; left: 36px; width: 5px; height: 5px; border-radius: 50%; background: #e95420; }
.ij { font: 700 15px "Liberation Mono", monospace; fill: #fff; }
.help-mark { font: 700 17px Roboto, sans-serif; fill: #fff; }
.dock-apps { margin-left: auto; margin-right: 20px; width: 36px; height: 34px; display: grid; grid-template-columns: repeat(3, 8px); grid-template-rows: repeat(3, 8px); justify-content: space-between; align-content: space-between; }
.dock-apps i { background: #fff; border-radius: 2px; }
```
